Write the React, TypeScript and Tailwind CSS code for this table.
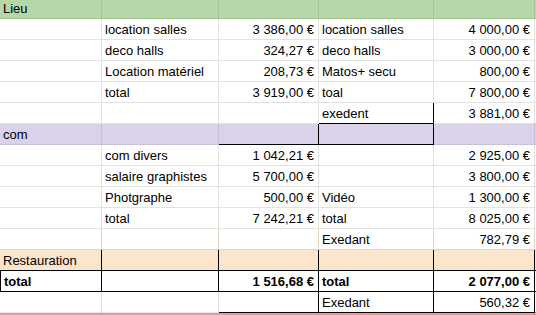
import React from "react";

type C = {
  t?: string;
  r?: boolean;
  b?: boolean;
  rb?: string;
  bb?: string;
  extra?: string;
};

const W = ["w-[102px]", "w-[117px]", "w-[100px]", "w-[115px]", "w-[101px]"];

function Row({
  h,
  bg,
  line,
  bline,
  cells,
}: {
  h: string;
  bg: string;
  line: string;
  bline?: string;
  cells: C[];
}) {
  const cs = [...cells];
  while (cs.length < 5) cs.push({});
  return (
    <div className={`flex ${h} ${bg}`}>
      {cs.map((c, i) => (
        <div
          key={i}
          className={`${W[i]} shrink-0 flex items-end border-r border-b ${c.rb ?? line} ${c.bb ?? bline ?? line} px-[3px] pb-[2px] ${c.r ? "justify-end pr-[4px]" : ""} ${c.extra ?? ""}`}
        >
          <span className={`leading-[15px] whitespace-nowrap ${c.b ? "font-bold" : ""}`}>{c.t ?? ""}</span>
        </div>
      ))}
      <div className={`flex-1 border-b ${bline ?? line}`} />
    </div>
  );
}

const G = "border-[#e2e2e2]";
const K = "border-black";

export default function App() {
  return (
    <div
      className="w-[536px] h-[315px] overflow-hidden bg-white text-black text-[13px]"
      style={{ fontFamily: '"Liberation Sans", Arial, sans-serif' }}
    >
      <Row h="h-[19px]" bg="bg-[#b6d7a8]" line="border-[#a5c497]" cells={[{ t: "Lieu" }]} />
      <Row
        h="h-[21px]"
        bg="bg-white"
        line={G}
        cells={[{}, { t: "location salles" }, { t: "3\u00a0386,00\u00a0€", r: true }, { t: "location salles" }, { t: "4\u00a0000,00\u00a0€", r: true }]}
      />
      <Row
        h="h-[21px]"
        bg="bg-white"
        line={G}
        cells={[{}, { t: "deco halls" }, { t: "324,27\u00a0€", r: true }, { t: "deco halls" }, { t: "3\u00a0000,00\u00a0€", r: true }]}
      />
      <Row
        h="h-[21px]"
        bg="bg-white"
        line={G}
        cells={[{}, { t: "Location matériel" }, { t: "208,73\u00a0€", r: true }, { t: "Matos+ secu" }, { t: "800,00\u00a0€", r: true }]}
      />
      <Row
        h="h-[21px]"
        bg="bg-white"
        line={G}
        cells={[{}, { t: "total" }, { t: "3\u00a0919,00\u00a0€", r: true }, { t: "toal" }, { t: "7\u00a0800,00\u00a0€", r: true }]}
      />
      <Row
        h="h-[21px]"
        bg="bg-white"
        line={G}
        bline="border-[#c8c0d8]"
        cells={[{}, {}, {}, { t: "exedent", bb: K }, { t: "3\u00a0881,00\u00a0€", r: true }]}
      />
      <Row
        h="h-[21px]"
        bg="bg-[#d9d2e9]"
        line="border-[#c8c0d8]"
        cells={[{ t: "com" }, {}, { rb: K }, { rb: K, bb: K }, {}]}
      />
      <Row
        h="h-[21px]"
        bg="bg-white"
        line={G}
        cells={[{}, { t: "com divers" }, { t: "1\u00a0042,21\u00a0€", r: true }, {}, { t: "2\u00a0925,00\u00a0€", r: true }]}
      />
      <Row
        h="h-[21px]"
        bg="bg-white"
        line={G}
        cells={[{}, { t: "salaire graphistes" }, { t: "5\u00a0700,00\u00a0€", r: true }, {}, { t: "3\u00a0800,00\u00a0€", r: true }]}
      />
      <Row
        h="h-[21px]"
        bg="bg-white"
        line={G}
        cells={[{}, { t: "Photgraphe" }, { t: "500,00\u00a0€", r: true }, { t: "Vidéo" }, { t: "1\u00a0300,00\u00a0€", r: true }]}
      />
      <Row
        h="h-[21px]"
        bg="bg-white"
        line={G}
        cells={[{}, { t: "total" }, { t: "7\u00a0242,21\u00a0€", r: true }, { t: "total" }, { t: "8\u00a0025,00\u00a0€", r: true }]}
      />
      <Row
        h="h-[21px]"
        bg="bg-white"
        line={G}
        bline="border-[#e6d2bc]"
        cells={[{}, {}, {}, { t: "Exedant" }, { t: "782,79\u00a0€", r: true }]}
      />
      <Row
        h="h-[21px]"
        bg="bg-[#fce5cd]"
        line="border-[#e6d2bc]"
        bline={K}
        cells={[{ t: "Restauration" }, {}, {}, {}, {}]}
      />
      <Row
        h="h-[21px]"
        bg="bg-white"
        line={K}
        cells={[
          { t: "total", b: true, extra: "border-l border-l-black" },
          {},
          { t: "1\u00a0516,68\u00a0€", r: true, b: true },
          { t: "total", b: true },
          { t: "2\u00a0077,00\u00a0€", r: true, b: true },
        ]}
      />
      <Row
        h="h-[21px]"
        bg="bg-white"
        line={G}
        bline="border-[#d98e8e]"
        cells={[{}, {}, { rb: K }, { t: "Exedant", rb: K, bb: K }, { t: "560,32\u00a0€", r: true, rb: K, bb: K }]}
      />
      <Row h="h-[21px]" bg="bg-[#ea9999]" line="border-[#d98e8e]" cells={[]} />
    </div>
  );
}
